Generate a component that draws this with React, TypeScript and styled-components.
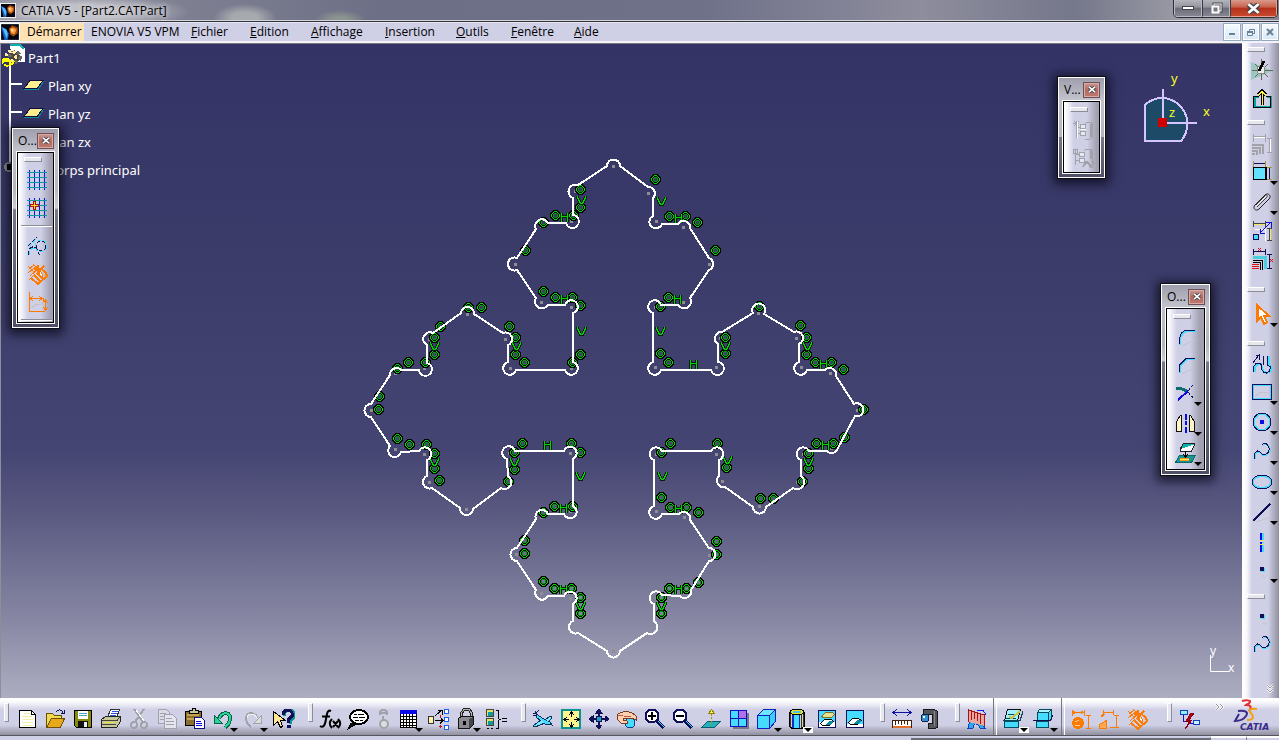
import React from "react";
import styled, { createGlobalStyle, css } from "styled-components";

const UI_FONT = '"Open Sans", "Noto Sans", sans-serif';
const TREE_FONT = '"Noto Sans", "Open Sans", sans-serif';

const GlobalStyle = createGlobalStyle`
  * { box-sizing: border-box; }
  body { margin: 0; overflow: hidden; background: #cfcfe6; font-family: ${UI_FONT}; }
  button { font: inherit; color: inherit; margin: 0; padding: 0; border: 0; background: none; }
  ul { list-style: none; margin: 0; padding: 0; }
  svg { display: block; }
`;

/* ---------- window frame ---------- */

const Window = styled.div`
  display: flex;
  flex-direction: column;
  height: 100vh;
  min-width: 0;
`;

const TitleBar = styled.header`
  display: flex;
  align-items: center;
  flex: none;
  height: 22px;
  border-bottom: 1px solid #34343e;
  box-shadow: inset 0 -1px #d4d4dc;
  background:
    radial-gradient(ellipse 110px 18px at 80px 12px, #c0c0c8 40%, transparent),
    radial-gradient(ellipse 32px 14px at 245px 18px, #a6aaae 40%, transparent),
    radial-gradient(ellipse 26px 10px at 340px 20px, #8c9490 30%, transparent),
    linear-gradient(90deg, #8e8f9c, #6d6f86 30%, #6f7189 55%, #8d8d9d 72%, #75778a 84%, #a6a6ae 95%, #83838f);
`;

const Title = styled.h1`
  flex: 1;
  margin: 0 0 0 5px;
  font-size: 12px;
  line-height: 20px;
  font-weight: 400;
  color: #000;
  white-space: nowrap;
  text-shadow: 0 0 5px #d8d8dc, 0 0 5px #d8d8dc;
`;

const CaptionButtons = styled.div`
  display: flex;
  align-self: flex-start;
  height: 18px;
  margin-right: 1px;
  border: 1px solid #2c2c34;
  border-top: 0;
  border-radius: 0 0 5px 5px;
  overflow: hidden;
`;

const CaptionButton = styled.button<{ $close?: boolean }>`
  display: grid;
  place-items: center;
  width: ${(p) => (p.$close ? 47 : 28)}px;
  height: 17px;
  border: 1px solid ${(p) => (p.$close ? "#e8a090" : "#b8b8c2")};
  border-top: 0;
  background: ${(p) =>
    p.$close
      ? "linear-gradient(#d99a8c, #c9604a 45%, #b5301a 50%, #c8482c)"
      : "linear-gradient(#b4b4bc, #94949e 45%, #6c6c78 50%, #868692)"};
  & + & { border-left: 1px solid #3a3a44; }
`;

const MenuBar = styled.nav`
  display: flex;
  align-items: center;
  flex: none;
  height: 21px;
  background: #cfcfe6;
  border-top: 1px solid #e6e6f2;
  border-bottom: 2px solid #f2f2f8;
`;

const MenuList = styled.ul`
  display: flex;
  flex: 1;
  height: 18px;
`;

const MenuItem = styled.button<{ $w: number; $active?: boolean }>`
  display: block;
  width: ${(p) => p.$w}px;
  height: 18px;
  padding-left: 7px;
  font-size: 12px;
  line-height: 18px;
  white-space: nowrap;
  text-align: left;
  background: ${(p) => (p.$active ? "#ffe2b3" : "transparent")};
`;

const AccessKey = styled.span`
  text-decoration: underline;
`;

const MdiButton = styled.button`
  display: grid;
  place-items: center;
  width: 18px;
  height: 18px;
  margin-left: 1px;
  border: 1px solid #93a9bd;
  background: linear-gradient(#f4faff, #d9e8f6);
  box-shadow: inset 0 0 0 1px #fff;
`;

const MdiGroup = styled.div`
  display: flex;
`;

const Body = styled.div`
  position: relative;
  display: flex;
  flex: 1;
  min-height: 0;
`;

const Main = styled.main`
  display: flex;
  flex-direction: column;
  flex: 1;
  min-width: 0;
`;

/* ---------- drawing area ---------- */

const Canvas = styled.section`
  position: relative;
  flex: 1;
  min-height: 0;
  overflow: hidden;
  border-left: 1px solid #8e8e98;
  border-top: 1px solid #77777f;
  background: linear-gradient(#333366, #3b3b6a 30%, #454573 62%, #55557e 70%, #81819f 86%, #adadc1);
`;

const SketchSvg = styled.svg`
  position: absolute;
  inset: 0;
  width: 100%;
  height: 100%;
`;

const Tree = styled.ul`
  position: relative;
  width: 180px;
  padding-left: 1px;
`;

const TreeNode = styled.li`
  display: flex;
  align-items: center;
  height: 28px;
  font-family: ${TREE_FONT};
  font-size: 13px;
  line-height: 18px;
  color: #fff;
  white-space: nowrap;
`;

const TreeGlyph = styled.svg`
  flex: none;
  height: 28px;
  margin-right: 2px;
`;

const CompassSvg = styled.svg`
  position: absolute;
  top: 20px;
  right: 21px;
`;

const AxisSvg = styled.svg`
  position: absolute;
  right: 6px;
  bottom: 20px;
`;

/* ---------- toolbars ---------- */

const SideBar = styled.aside`
  display: flex;
  flex-direction: column;
  flex: none;
  width: 37px;
  background: linear-gradient(90deg, #fff 2px, #f6f6fb 5px, #cfcfe6 10px, #cfcfe6 26px, #8f8f9f);
`;

const BottomWrap = styled.div`
  position: relative;
  flex: none;
`;

const BottomBar = styled.div`
  display: flex;
  align-items: flex-start;
  height: 38px;
  border-bottom: 1px solid #55555f;
  background: linear-gradient(#fff 2px, #f4f4fa 5px, #cfcfe6 12px, #cfcfe6 27px, #90909f);
`;

const StatusBar = styled.footer`
  display: flex;
  height: 4px;
  justify-content: flex-end;
  background: #cfcfe6;
`;

const StatusPart = styled.span<{ $w: number; $sunken?: boolean }>`
  width: ${(p) => p.$w}px;
  border-bottom: ${(p) => (p.$sunken ? "2px solid #6c6c78" : "0")};
  border-top: ${(p) => (p.$sunken ? "0" : "2px solid #fff")};
  border-left: ${(p) => (p.$sunken ? "0" : "1px solid #77777f")};
`;

const Cell = styled.span<{ $vertical?: boolean; $menu?: boolean; $narrow?: boolean }>`
  position: relative;
  flex: none;
  display: block;
  ${(p) =>
    p.$vertical
      ? css`
          height: ${p.$menu ? 30 : 28}px;
          padding: 2px 0 0 8px;
        `
      : css`
          width: ${p.$narrow ? 22 : p.$menu ? 30 : 28}px;
          height: 37px;
          padding: 9px 0 0 ${p.$narrow ? 0 : 2}px;
        `}
`;

const ToolButton = styled.button`
  display: block;
  width: 24px;
  height: 24px;
`;

const Caret = styled.span<{ $boxed?: boolean }>`
  position: absolute;
  right: 0;
  bottom: 2px;
  padding: 1px;
  background: ${(p) => (p.$boxed ? "#fff" : "transparent")};
  &::before {
    content: "";
    display: block;
    border: 4px solid transparent;
    border-top-color: #000;
    border-bottom: 0;
  }
`;

const Grip = styled.span<{ $vertical?: boolean; $space: number; $before: number }>`
  display: block;
  flex: none;
  ${(p) =>
    p.$vertical
      ? css`
          height: ${p.$space}px;
          padding: ${p.$before}px 0 0 5px;
          &::before { content: ""; display: block; width: 16px; height: 3px; }
        `
      : css`
          width: ${p.$space}px;
          padding: 5px 0 0 ${p.$before}px;
          &::before { content: ""; display: block; width: 3px; height: 17px; }
        `}
  &::before {
    background: #e6e6ee;
    border-top: 1px solid #fff;
    border-left: 1px solid #fff;
    border-right: 1px solid #8d8d97;
    border-bottom: 1px solid #8d8d97;
  }
`;

const Divider = styled.span`
  flex: none;
  width: 8px;
  height: 37px;
  padding-left: 2px;
  &::before {
    content: "";
    display: block;
    width: 2px;
    height: 37px;
    border-left: 1px solid #77777f;
    border-right: 1px solid #fff;
  }
`;

const More = styled.button<{ $down?: boolean }>`
  align-self: ${(p) => (p.$down ? "flex-end" : "auto")};
  margin: ${(p) => (p.$down ? "auto 4px 5px 0" : "5px 0 0 12px")};
`;

const Logo = styled.svg`
  position: absolute;
  right: 3px;
  bottom: 8px;
`;

/* ---------- floating palettes ---------- */

const PaletteBox = styled.section<{ $w: number }>`
  position: absolute;
  width: ${(p) => p.$w}px;
  padding: 0 4px 4px;
  border: 1px solid #0c0c14;
  box-shadow: inset 0 0 0 1px #fff, 0 2px 10px 3px rgba(5, 5, 20, 0.75);
  background: linear-gradient(#9c9cab, #c2c2cc 22px, #b4b4bf 60px, #ccccd4 40%, #77778a 41%, #4e4e66);
`;

const LeftPalette = styled(PaletteBox)`
  left: 10px;
  top: 83px;
`;

const ViewPalette = styled(PaletteBox)`
  right: 136px;
  top: 32px;
`;

const OperationPalette = styled(PaletteBox)`
  right: 31px;
  top: 239px;
`;

const PaletteTitle = styled.h2`
  display: flex;
  align-items: center;
  justify-content: space-between;
  height: 23px;
  margin: 0;
  padding: 2px 1px 0 2px;
  font-size: 12px;
  line-height: 18px;
  font-weight: 400;
  color: #000;
`;

const PaletteClose = styled.button`
  display: grid;
  place-items: center;
  width: 17px;
  height: 16px;
  border: 1px solid #6b5058;
  box-shadow: inset 0 0 0 1px #d8aaa6;
  background: linear-gradient(#c99a96, #b4685e 50%, #bd7a70);
`;

const PaletteBody = styled.div<{ $h: number }>`
  height: ${(p) => p.$h}px;
  overflow: hidden;
  border: 1px solid #fff;
  outline: 1px solid #000;
  outline-offset: -2px;
  padding: 2px;
  background: linear-gradient(90deg, #fff 2px, #f0f0f8 5px, #cfcfe6 11px, #cfcfe6 24px, #a0a0b0 34px);
`;

const PaletteCell = styled(Cell)`
  padding: 2px 0 0 6px;
`;

const PaletteRule = styled.hr`
  height: 2px;
  margin: 3px 0 5px 2px;
  border: 0;
  border-top: 1px solid #8d8d97;
  background: #fff;
`;

/* ---------- icons ---------- */

const N = "#101058";
const C = "#45dcff";
const O = "#ff7a00";
const G = "#a2a2aa";

const S = (d: string, stroke: string, w = 1, fill = "none") => (
  <path d={d} stroke={stroke} strokeWidth={w} fill={fill} />
);

const gridLines = (
  <>
    {S("M4.5 2v20M9.5 2v20M14.5 2v20M19.5 2v20", "#0a18e8")}
    {S("M2 4.5h20M2 9.5h20M2 14.5h20M2 19.5h20", "#0c9a9a")}
  </>
);

const curveIcon = (
  <>
    {S("M5 19C5 12 8 10 11 14C14 18 21 14 20 9C19 4 15 3 13 6", C)}
    {S("M4 19C4 11 8 9 11 13C14 17 20 13 19 8C18 4 15 2 12 5", N)}
  </>
);

const pointIcon = (
  <>
    {S("M11 20l3-3M14 20l3-3", "#c4c4cc")}
    <rect x="11" y="10" width="4" height="4" fill={C} />
    <rect x="10" y="9" width="4" height="4" fill={N} />
  </>
);

const handBrush = (
  <>
    {S("M4 7l5-4M3 11l9-7M5 14l9-8M4 18l5-5M3 4l6 6M8 2l5 5", O, 1)}
    {S("M13 3v8M9 7h9M15 8l4-4M10 14l5 5", O, 2)}
    {S("M14 6l4 8-3 1z", O, 1, "#fff")}
    {S("M6 16l7 6 9-8-2-5M9 13l6 6M12 11l6 6M18 8l4 5", O, 2)}
  </>
);

const icons: Record<string, React.ReactNode> = {
  newFile: (
    <>
      {S("M4.5 3.5h12l4 4v13h-16z", "#000", 1, "#fff")}
      {S("M7 9h10M8 12h11M7 15h11M8 18h10M9 6h6", "#f4f0a0")}
      {S("M16.5 3.5v4h4", "#000")}
    </>
  ),
  open: (
    <>
      {S("M3.5 20.5v-14h6l2 2h7v3", "#6a5200", 1, "#f0d850")}
      {S("M3.5 20.5l5-9h13l-4 9z", "#6a5200", 1, "#e8a818")}
      {S("M13 5c2-3 6-3 7 1M18 6h3v-3", N)}
    </>
  ),
  save: (
    <>
      {S("M3.5 3.5h17v17h-15l-2-2z", "#000", 1, "#8a8a10")}
      <rect x="7" y="4" width="10" height="8" fill="#fff" />
      {S("M8 6.5h8M8 8.5h8", "#4aa8c8")}
      <rect x="7" y="14" width="10" height="6" fill="#111" />
      <rect x="13" y="15" width="3" height="5" fill="#eee" />
    </>
  ),
  print: (
    <>
      {S("M8.5 10.5l3-8h9l-3 8z", "#333", 1, "#fff")}
      {S("M13 4.5h6M12 6.5h6M11 8.5h6", "#2a50e0")}
      {S("M2.5 12.5l4-3h15v5l-4 6h-15z", "#222", 1, "#c8c89a")}
      {S("M3 13.5h15l3-4M3 17.5h14", "#44443c")}
      {S("M5 15.5h10", "#e8e030")}
    </>
  ),
  cut: (
    <>
      {S("M7 2l9 13M17 2l-9 13", G, 2)}
      <circle cx="7" cy="18" r="3" fill="none" stroke={G} strokeWidth="2" />
      <circle cx="17" cy="18" r="3" fill="none" stroke={G} strokeWidth="2" />
      {S("M9 3l8 11", "#fff")}
    </>
  ),
  copy: (
    <>
      {S("M3.5 2.5h8l3 3v11h-11z", G, 1, "#dadaea")}
      {S("M5 6.5h6M5 9.5h7M5 12.5h6", G)}
      {S("M9.5 7.5h8l4 4v10h-12z", G, 1, "#e4e4f0")}
      {S("M11 11.5h6M11 14.5h8M11 17.5h8", G)}
    </>
  ),
  paste: (
    <>
      <rect x="2.5" y="4.5" width="16" height="14" fill="#8a7030" stroke="#000" />
      {S("M4 8h12M4 12h8", "#c8a050", 2)}
      {S("M6.5 6.5v-3h3v-2h3v2h3v3z", "#000", 1, "#c8c8a0")}
      {S("M11.5 10.5h7l3 3v8h-10z", "#101080", 1, "#fff")}
      {S("M13 14.5h5M13 16.5h6M13 18.5h6", "#1010e0")}
    </>
  ),
  undo: (
    <>
      {S("M8 12C10 5 19 4 19 11C19 15 17 18 14 21", "#0a6050", 4)}
      {S("M8 12C10 5 19 4 19 11C19 15 17 18 14 20", "#28d890", 2)}
      {S("M3.5 8.5v8h8z", "#0a6050", 1, "#28d890")}
    </>
  ),
  redo: (
    <>
      {S("M17 12C15 5 6 4 5 11C5 15 7 18 10 20", G, 2)}
      {S("M17 13C15 6 7 5 6 11", "#eee")}
      {S("M20.5 8.5v8h-8z", G, 1, "#ddd")}
    </>
  ),
  help: (
    <>
      {S("M13 9v-3l3-3h4l3 3v4l-4 4v3", "#0e9494", 3)}
      {S("M12 8v-2l3-3h4l2 3v3l-4 4v3", N, 3)}
      <rect x="16" y="18" width="4" height="3" fill={N} />
      {S("M2.5 4.5v14l4-4 3 6 2-1-2-6h5z", "#000", 1, "#ffe890")}
    </>
  ),
  formula: (
    <g shapeRendering="auto">
      {S("M13 4C9 2 9 8 8 12C7 19 5 21 2 19M4 9.5h8", "#000", 2)}
      {S("M14 12c-3 3-3 6 0 9M20 12c3 3 3 6 0 9M15 14l5 6M20 14l-5 6", "#000", 2)}
    </g>
  ),
  comment: (
    <>
      {S("M5 16l-3 6l8-5", "#000", 1, "#111")}
      <ellipse cx="13" cy="10" rx="9" ry="7" fill="#fff" stroke="#000" strokeWidth="2" />
      {S("M8 7.5h3M12 7.5h6M7 10.5h5M13 10.5h6M9 13.5h4M14 13.5h3", "#000")}
    </>
  ),
  check: (
    <g shapeRendering="auto">
      {S("M8 8V5l2-2h3l2 2v3M8 6h7M11 9v4", G, 2)}
      <circle cx="12" cy="17" r="4" fill="#ddd" stroke={G} strokeWidth="2" />
    </g>
  ),
  table: (
    <>
      <rect x="4.5" y="3.500" width="16" height="17" fill="#fff" stroke="#000" />
      <rect x="4" y="3" width="17" height="4" fill="#0a0ae8" />
      {S("M4 9.5h17M4 12.5h17M4 15.5h17M4 18.5h17M7.5 7v14M10.5 7v14M13.5 7v14M16.5 7v14", "#000")}
    </>
  ),
  relations: (
    <>
      <rect x="2.5" y="9.5" width="5" height="7" fill="#fff0b0" stroke="#333" />
      {S("M9 13.5h8M9 9l7-6M12 3.5h4.5v4M14 10l3 3.500-3 3", "#000")}
      <rect x="18.5" y="2.5" width="4" height="4" fill="#fff" stroke="#1860f0" />
      <rect x="18.5" y="10.5" width="4" height="4" fill="#fff" stroke="#1860f0" />
      <rect x="18.5" y="18.5" width="4" height="4" fill="#fff" stroke="#1860f0" />
      {S("M14.5 8v3M14.5 18v3M13 19.5h3", "#c01020")}
    </>
  ),
  lock: (
    <>
      {S("M7.5 11V6l3-4h4l3 4v5", "#222", 3)}
      {S("M7.5 11V6l3-4h4l3 4v5", "#b0b0b0", 1)}
      {S("M4.5 11.5l3-2h12v8l-4 4h-11z", "#111", 1, "#8a8a90")}
      {S("M15 12l4-2v7l-4 4z", "none", 0, "#44444a")}
      <rect x="9" y="14" width="3" height="4" fill="#000" />
    </>
  ),
  equivalent: (
    <>
      <rect x="2.5" y="2.5" width="7" height="7" fill="#e8e060" stroke="#444" />
      <rect x="4" y="5" width="5" height="4" fill="#0c9a9a" />
      <rect x="2.5" y="11.5" width="7" height="7" fill="#e8e060" stroke="#444" />
      <rect x="4" y="14" width="5" height="4" fill="#0c9a9a" />
      {S("M3 21.5h2M7 21.5h2M12 3.5h2v8l2 1l-2 1v8h-2M18 11.5h5M18 14.5h5", "#000")}
    </>
  ),
  fly: (
    <>
      {S("M5 5.500L8 9L13 12L19 15L21 18L14 17L10 14L6 11Z", "#0a3060", 1, C)}
      {S("M10 13L2 19L4 20L14 16M15 12L20 9L21 11L17 15", "#0a3060", 1, "#7ae8ff")}
      {S("M2 6h3l3-3M2 9l4-1", N)}
    </>
  ),
  fit: (
    <>
      <rect x="3" y="3" width="18" height="18" fill="#fff38c" stroke="#0c9494" strokeWidth="2" />
      {S("M12.5 5v14M5 12.5h14", "#000")}
      {S("M10 8l2.5-3 2.5 3M10 17l2.5 3 2.5-3M8 10l-3 2.500 3 2.500M17 10l3 2.500-3 2.500", "#000")}
      <rect x="10" y="10" width="5" height="5" fill="#fff38c" />
    </>
  ),
  pan: (
    <>
      {S("M12 2v20M2 12h20", N, 2)}
      {S("M9 6l3-4 3 4zM9 18l3 4 3-4zM6 9l-4 3 4 3zM18 9l4 3-4 3z", N, 1, N)}
      <rect x="9.5" y="9.5" width="5" height="5" fill="#1ca0c0" stroke={N} />
    </>
  ),
  rotate: (
    <>
      <circle cx="15" cy="16" r="5" fill={C} stroke="#123c90" />
      {S("M2.5 7.5C8 3 16 4 21 9v4l-4-2H9l-1 2l4 1v2H6L3 13z", "#7a3a20", 1, "#ffd0b0")}
      {S("M3 8.5h5M9 9.5h7", "#b06040")}
    </>
  ),
  zoomIn: (
    <>
      {S("M14 14l7 7", N, 4)}
      {S("M15 14l6 6", C)}
      <circle cx="9" cy="9" r="6.5" fill="#fff" stroke={N} strokeWidth="2" />
      {S("M9 5v8M5 9h8", "#000", 2)}
    </>
  ),
  zoomOut: (
    <>
      {S("M14 14l7 7", N, 4)}
      {S("M15 14l6 6", C)}
      <circle cx="9" cy="9" r="6.5" fill="#fff" stroke={N} strokeWidth="2" />
      {S("M5 9h8", "#000", 2)}
    </>
  ),
  normal: (
    <>
      {S("M2.5 20.5l6-6h13l-6 6z", "#0c5c70", 1, "#28b0b8")}
      {S("M12.5 17v-3M12.5 12v-2M12.5 9v-2", "#b09000")}
      {S("M9.5 6.5l3-4 3 4z", "#908000", 1, "#fff060")}
    </>
  ),
  multiView: (
    <>
      <rect x="6" y="6" width="16" height="16" fill="#777784" />
      <rect x="3.5" y="3.5" width="16" height="16" fill={C} stroke="#1010c0" />
      <rect x="12" y="4" width="7" height="7" fill="#b070e8" />
      {S("M11.5 4v15M4 11.5h15", "#1010c0")}
    </>
  ),
  iso: (
    <>
      {S("M2.5 8.5h12v13h-12z", "#1020c0", 1, C)}
      {S("M2.5 8.5l6-6h12l-6 6z", "#1020c0", 1, "#6ae6ff")}
      {S("M14.5 8.5l6-6v12l-6 7z", "#1020c0", 1, "#38d0f8")}
    </>
  ),
  cylinder: (
    <>
      {S("M4.5 5v14C6 23 18 23 19.5 19V5", "#000", 1, "#1828c8")}
      <rect x="9" y="7" width="5" height="14" fill={C} />
      {S("M6.5 6v14M15.5 6v15M17.5 6v14", "#f0e020")}
      <ellipse cx="12" cy="5" rx="7" ry="3" fill="#f0e020" stroke="#000" />
      <ellipse cx="12" cy="5" rx="4" ry="1" fill="#40c8f0" />
    </>
  ),
  hideShow: (
    <>
      <rect x="3.5" y="3.5" width="17" height="17" fill={C} stroke={N} />
      <rect x="4" y="15" width="16" height="5" fill="#fff" />
      {S("M6.5 9.5l4-4h7l2 2-3 3h-8z", "#777020", 1, "#e8e090")}
      {S("M5.5 16.5l4-4h7l2 2-4 4h-7z", "#000", 1, "#fff")}
      {S("M10 18l4-4h3l1 1-3 3z", "none", 0, "#0c8c9c")}
    </>
  ),
  swap: (
    <>
      <rect x="3.5" y="3.5" width="17" height="17" fill={C} stroke={N} />
      <rect x="4" y="17" width="16" height="3" fill="#fff" />
      {S("M5.5 15.5l4-4h6l3 2-4 4h-7z", "#000", 1, "#fff")}
      {S("M10 17l4-4h3l1 1-3 3z", "none", 0, "#0c8c9c")}
    </>
  ),
  measure: (
    <>
      {S("M3 5.5h18M7 2L3 5.5L7 9M17 2l4 3.500L17 9", "#1010a0")}
      <rect x="2.5" y="13.5" width="19" height="7" fill="#fff" stroke="#402010" />
      {S("M3 20h18", "#e07030", 2)}
      {S("M5.5 14v4M8.5 14v3M11.5 14v4M14.5 14v3M17.500 14v4", "#402010")}
    </>
  ),
  inertia: (
    <>
      {S("M5.500 2.500h11l3 2v16l-3 1h-6v-5h4v-9h-9z", "#18181c", 1, "#55555c")}
      {S("M16.500 4v15", "#88888e")}
      <circle cx="7" cy="11" r="4" fill="#3090d0" stroke="#102040" />
      <rect x="5" y="9" width="2" height="2" fill="#fff" />
    </>
  ),
  cutPart: (
    <>
      {S("M3 21C5 9 13 8 20 21L15 21C13 16 9 15 8 21z", "#1040c0", 1, "#30a8f0")}
      {S("M3.5 15V3L19.5 8V19", "#b01010", 1, "#e8a8a0")}
      {S("M6.5 4v9M9.5 5v7M12.5 6v8M15.5 7v10", "#b01010")}
      {S("M12 3.500h6l3 4", "#1020e0")}
    </>
  ),
  sketchPos: (
    <>
      {S("M3.5 14.5h14v6h-14z", "#005060", 1, C)}
      {S("M6.5 2.5h13l-3 11h-13z", "#101010", 1, "#9cf0ff")}
      {S("M7 7.5h10M5 11.5h10M2 13.5h17l3-9", "#084858")}
      {S("M8 10l3 1 8-7", "#c8c040", 2)}
    </>
  ),
  sketchPos2: (
    <>
      {S("M5.5 14.5h12v6h-12z", "#005060", 1, C)}
      {S("M6.5 5.500l2-3h12l-3 3z", "#084858", 1, "#a8f4ff")}
      {S("M6.5 5.5h11v8h-11zM17.500 5.500l3-3v10l-3 2z", "#084858", 1, C)}
      {S("M2 13.5h17l3-5", "#101050")}
    </>
  ),
  orangeDim: (
    <>
      <circle cx="9" cy="16" r="6" fill={O} />
      {S("M3.5 3v6M15.5 3v6M3 5.5h12M19.5 9v12M17 8.5h5M17 21.5h5", O)}
      {S("M6 4l-2 1.500 2 1.500M12 4l2 1.500-2 1.500", O)}
      {S("M6 15l4-2M6 18.5h5", "#ffd0a0")}
    </>
  ),
  orangeContour: (
    <>
      {S("M6.5 3v5M16.5 3v5M6 5.5h10M19.500 8v12M17 20.500h5M17 8.500h5", O)}
      {S("M4 10l3-3", O, 2)}
      {S("M2.500 17.500l7-4v8h-7zM13 20.500h5", O, 1, "#ffa850")}
    </>
  ),
  orangeHatch: handBrush,
  spec: (
    <>
      {S("M3.5 3.5h7v4h-7z", "#1040c0", 1, "#8af0f0")}
      {S("M16.5 13.5h6v4h-6z", "#1040c0", 1, "#c8f0ff")}
      {S("M6.5 8v6.500h4M13 16.500h3", "#1010d0")}
      {S("M14 6l-5 8h4l-5 8 7-9h-3l5-7z", "#900010", 1, "#b00818")}
    </>
  ),
  star: (
    <>
      {S("M1 4l22 9-22 9z", "none", 0, "#9cc8c4")}
      {S("M11.500 1v21M2 12.500h21M5 6l13 13M18 6L5 19", "#66665c")}
      <circle cx="11" cy="12" r="4" fill="#ececec" stroke="#88887c" />
      {S("M9 13l5-10", "#000", 3)}
    </>
  ),
  exit: (
    <>
      {S("M9 11H5v10H21V11H17", "#0ca0a0", 2)}
      {S("M9 10.5H3.5v11H20.5v-11H16", "#000")}
      {S("M12 19V6M8 9l4-4 4 4", "#000", 3)}
      {S("M12.5 19V6M8 9.5l4-4 4 4", "#fff040")}
    </>
  ),
  constraintDlg: (
    <>
      {S("M3.5 2v8M15.5 2v8M4 4.5h11M19.5 6v14M17 6.5h5M17 20.5h5", G)}
      {S("M2 12.500h11v9M2 15.500h8v6M2 18.500h5v4M2 21.500h3", G, 2)}
      {S("M4 5.5h11M20.5 7v13", "#fff")}
    </>
  ),
  constraint: (
    <>
      {S("M3.5 1v6M15.5 1v6M17 7.5h5M17 19.5h5", "#a09840")}
      {S("M4 3.5h11M19.5 8v11", N)}
      <rect x="3.5" y="7.5" width="12" height="12" fill="#62e2ff" stroke="#000" />
      {S("M15.500 7v13", "#000", 2)}
    </>
  ),
  clip: (
    <g shapeRendering="auto">
      {S("M5 15L15 5c3-3 7 1 4 4L9 19c-3 3-7-1-4-4", "#222")}
      {S("M7 17L17 7c1-2-1-3-2-1L6 15", "#444")}
      {S("M6 16L16 6", "#fff")}
    </g>
  ),
  autoConstraint: (
    <>
      {S("M3.5 1v6M15.5 1v6M4 3.5h11M19.5 8v12M17 8.5h5M17 20.5h5", "#444")}
      {S("M4 4.5h11M20.5 9v11", "#f0e860")}
      {S("M5 9.500h10v11M8 13v4", "#fff")}
      {S("M10 13L21 2M16 2.500h5.500v5M10.500 9v4.500h4", "#1010e0")}
      <rect x="3.5" y="14.5" width="5" height="5" fill={C} stroke={N} />
    </>
  ),
  animate: (
    <>
      {S("M3.5 1v6M15.5 1v6M4 3.5h11M19.5 6v14M17 6.5h5M17 20.5h5", N)}
      {S("M3 9h12v12", "#48d0e0", 3)}
      {S("M3 12.500h9v9M3 14.500h7v7", "#000")}
      {S("M2 16.5h7M2 18.5h7M2 20.5h7", "#e01010")}
      {S("M8 0l3 3M11 0l-3 3M20 11l3 3M23 11l-3 3", "#e01010")}
    </>
  ),
  select: (
    <>
      {S("M7 3v16l4-4 3 7 3-2-3-6h5z", O, 2, "#fff")}
      {S("M8 4v13", O, 2)}
    </>
  ),
  profile: (
    <>
      {S("M5 20v-5l3-3h3l1 4 1 3 3 2 4-1 2-4-3-3V4", C, 2)}
      {S("M3.500 20v-5l3-4h3l2 2v4l2 3 3 1 3-2 1-4-3-2V4M13.500 4v9M3 11l6-8v5M5.500 3.500H9", N)}
    </>
  ),
  rectangle: (
    <>
      <rect x="3" y="5" width="18" height="14" fill="none" stroke={C} strokeWidth="2" />
      <rect x="2.5" y="4.5" width="19" height="15" fill="none" stroke={N} />
      {S("M5 16l6-4h7", "#c4c4cc")}
    </>
  ),
  circle: (
    <>
      <circle cx="12" cy="12" r="8" fill="none" stroke={C} strokeWidth="2" />
      <circle cx="12" cy="12" r="9" fill="none" stroke={N} />
      <rect x="10" y="10" width="4" height="4" fill="#0a0ae8" />
    </>
  ),
  spline: curveIcon,
  ellipse: (
    <>
      <ellipse cx="12" cy="12" rx="9" ry="6" fill="none" stroke={C} strokeWidth="2" />
      <ellipse cx="12" cy="12" rx="10" ry="7" fill="none" stroke={N} />
    </>
  ),
  line: (
    <>
      {S("M4 21L21 4", C)}
      {S("M3 21L20 4", N, 2)}
      {S("M6 22l15-5", "#c4c4cc")}
    </>
  ),
  axis: (
    <>
      {S("M13 3v7M13 12v1M13 15v7", C, 2)}
      {S("M11 3v7M11 12v2M11 15v7", "#0a0ae8", 2)}
      {S("M10 10.500h4M10 14.500h4", "#f0e860")}
    </>
  ),
  point: pointIcon,
  grid: gridLines,
  snap: (
    <>
      {gridLines}
      {S("M9.500 5v9M5 9.500h9", "#b01010", 3)}
      {S("M9.500 6v7M6 9.500h7", "#ffe020")}
    </>
  ),
  construction: (
    <g strokeDasharray="4 2">
      {S("M3 12L12 3M3 21c0-7 5-10 8-7s1 6 4 7", N)}
      {S("M4 13l8-9M4 21c0-6 4-8 7-6", C)}
      <circle cx="16" cy="12" r="5" fill="none" stroke={N} />
      <circle cx="16" cy="12" r="6" fill="none" stroke={C} />
    </g>
  ),
  geomConstraint: handBrush,
  dimConstraint: (
    <>
      {S("M4.5 2v19.500H20M4 8.500h14M20.5 10v9M18 10.5h4M18.500 8v5", O)}
      {S("M8 6l-3 2.500 3 2.500M14 6l3 2.500-3 2.500M18 13l2.500-3 2.500 3M18 17l2.500 3 2.500-3", O)}
      {S("M6 18l6-4 3 1 4-3", "#c4c4cc")}
    </>
  ),
  viewDoc: (
    <>
      {S("M5.500 3v17M6 9.500h3M6 15.500h3M2 5.500h6M3 3l5 5M8 3L3 8", G)}
      {S("M9.500 6.500h5v4h-5zM9.500 13.500h5v4h-5z", G, 1, "#e8e8f0")}
      {S("M13.500 6.500l2-2h5l1 2v13l-3 2h-5", G, 1)}
      <rect x="19" y="6" width="3" height="13" fill={G} />
      {S("M6.500 4v16M10 11.500h5", "#fff")}
    </>
  ),
  viewDoc2: (
    <>
      {S("M4.500 3v16M5 8.500h3M5 14.500h3M2 3.500h4v4H2z", G)}
      {S("M8.500 6.500h5v4h-5zM8.500 12.500h5v4h-5z", G, 1, "#e8e8f0")}
      {S("M12.500 5.500l2-2h6l1 2v8", G)}
      <rect x="19" y="4" width="3" height="9" fill={G} />
      {S("M12 21c2-5 5-5 7-2s4-2 2-4M15 15l6 7", G, 2)}
    </>
  ),
  corner: (
    <>
      {S("M6 20V13l3-5 4-2h9", C, 2)}
      {S("M5.500 19v-6l2-5 4-3h9", N)}
      {S("M8 21l14-7", "#c4c4cc")}
    </>
  ),
  chamfer: (
    <>
      {S("M6 20v-7l7-7h8", C, 2)}
      {S("M5.500 19v-7l7-7h8", N)}
      {S("M8 21l12-6", "#c4c4cc")}
    </>
  ),
  trim: (
    <>
      {S("M2 7.500h5l7 3", "#0c6c6c", 3)}
      {S("M4 19L14 10", "#0a0ae8", 2)}
      <g strokeDasharray="3 2">{S("M14 10L20 3M14 11l6 7", N)}</g>
    </>
  ),
  mirror: (
    <>
      {S("M2.5 20.5V11l4-7h1v16.500zM15.5 20.5V4h1l4 7v9.500z", "#111", 1, "#fdf6c4")}
      {S("M12 3v6M12 10v4M12 16v6", "#0a0ae8", 2)}
    </>
  ),
  project: (
    <>
      {S("M6.5 7.5l3-5h11l-2 5z", "#222", 1, "#0cb0a8")}
      {S("M6.500 8v2.500h11l3-7", "#222", 1, "#fff")}
      {S("M1.5 21.5l4-7h16l-4 7z", "#0a6868", 1, "#189890")}
      {S("M6 18.500h9", "#ff9020", 3)}
      {S("M6 18.500h9", "#ffee40")}
      {S("M11.5 10v6M9 13l2.500 3 2.500-3", "#000")}
    </>
  ),
};

interface Tool {
  icon: string;
  label: string;
  menu?: boolean;
  boxed?: boolean;
  narrow?: boolean;
}
interface GripSpec {
  space: number;
  before: number;
}
type BarItem = Tool | GripSpec | "divider";

const t = (icon: string, label: string, extra: Partial<Tool> = {}): Tool => ({ icon, label, ...extra });
const M = { menu: true };

const bottomTools: BarItem[] = [
  { space: 13, before: 4 },
  t("newFile", "Nouveau"), t("open", "Ouvrir"), t("save", "Enregistrer"), t("print", "Imprimer"),
  t("cut", "Couper"), t("copy", "Copier"), t("paste", "Coller"), t("undo", "Annuler", M),
  t("redo", "Rétablir", M), t("help", "Qu'est-ce que c'est ?"),
  { space: 19, before: 11 },
  t("formula", "Formule"), t("comment", "Commentaire"), t("check", "Vérification", { narrow: true }),
  t("table", "Table de paramétrage", M), t("relations", "Relations"), t("lock", "Verrouiller", M),
  t("equivalent", "Dimensions équivalentes"),
  { space: 19, before: 11 },
  t("fly", "Mode survol"), t("fit", "Centrer tout"), t("pan", "Panoramique"), t("rotate", "Rotation"),
  t("zoomIn", "Zoom avant"), t("zoomOut", "Zoom arrière"), t("normal", "Vue normale"),
  t("multiView", "Vues multiples"), t("iso", "Vue isométrique", M),
  t("cylinder", "Ombrage", { menu: true, boxed: true }), t("hideShow", "Cacher/Afficher"),
  t("swap", "Espace visible"),
  { space: 19, before: 11 },
  t("measure", "Mesure entre"), t("inertia", "Mesure d'inertie"),
  { space: 19, before: 11 },
  t("cutPart", "Couper la pièce"), "divider",
  t("sketchPos", "Fond 3D", { menu: true, boxed: true }), t("sketchPos2", "Visualisation", M), "divider",
  t("orangeDim", "Diagnostics"), t("orangeContour", "Contraintes dimensionnelles"),
  t("orangeHatch", "Contraintes géométriques"),
  { space: 24, before: 16 },
  t("spec", "Analyse d'esquisse"),
];

const sideTools: BarItem[] = [
  { space: 13, before: 4 },
  t("star", "Esquisse"), t("exit", "Sortir de l'atelier"),
  { space: 18, before: 8 },
  t("constraintDlg", "Contraintes choisies"), t("constraint", "Contrainte", M), t("clip", "Fixer ensemble", M),
  t("autoConstraint", "Contrainte automatique"), t("animate", "Animer la contrainte"),
  { space: 26, before: 13 },
  t("select", "Sélection", M),
  { space: 20, before: 11 },
  t("profile", "Profil"), t("rectangle", "Rectangle", M), t("circle", "Cercle", M), t("spline", "Spline", M),
  t("ellipse", "Ellipse", M), t("line", "Droite", M), t("axis", "Axe"), t("point", "Point", M),
  { space: 17, before: 8 },
  t("point", "Point isolé"), t("spline", "Courbe"),
];

function Icon({ name }: { name: string }) {
  return (
    <svg width="24" height="24" viewBox="0 0 24 24" shapeRendering="crispEdges" aria-hidden="true">
      {icons[name]}
    </svg>
  );
}

function ToolCell({ tool, vertical }: { tool: Tool; vertical?: boolean }) {
  return (
    <Cell $vertical={vertical} $menu={tool.menu} $narrow={tool.narrow}>
      <ToolButton type="button" aria-label={tool.label}>
        <Icon name={tool.icon} />
      </ToolButton>
      {tool.menu && <Caret $boxed={tool.boxed} />}
    </Cell>
  );
}

function ToolStrip({ items, vertical }: { items: BarItem[]; vertical?: boolean }) {
  return (
    <>
      {items.map((item, i) => {
        if (item === "divider") return <Divider key={i} />;
        if ("space" in item)
          return <Grip key={i} $vertical={vertical} $space={item.space} $before={item.before} />;
        return <ToolCell key={i} tool={item} vertical={vertical} />;
      })}
    </>
  );
}

function CloseX({ width, height }: { width: number; height: number }) {
  return (
    <svg width={width} height={height} viewBox="0 0 9 9" preserveAspectRatio="none" aria-hidden="true">
      <path d="M1 1l7 7M8 1l-7 7" stroke="#44444c" strokeWidth="4" />
      <path d="M1 1l7 7M8 1l-7 7" stroke="#fff" strokeWidth="2" />
    </svg>
  );
}

function FlameIcon({ width, height }: { width: number; height: number }) {
  return (
    <svg width={width} height={height} viewBox="0 0 18 16" preserveAspectRatio="none" aria-hidden="true">
      <rect width="18" height="16" fill="#fff" />
      <rect x="1" y="1" width="16" height="14" fill="#050510" />
      <path d="M1 3l4 2 3 4-1 6H4z" fill="#1460c0" />
      <path d="M2 4l4 2 1 4-1 4z" fill="#58b8ff" />
      <path d="M8 5l3-3 5 2v5l-4 3-3-2z" fill="#a04810" />
      <path d="M9 5l3-1 3 2-2 4-3-1z" fill="#ff9a38" />
      <path d="M10 5l2 1v2l-2-1z" fill="#ffe8c0" />
    </svg>
  );
}

/* ---------- sketch geometry ---------- */

/* One row per corner: centre x, y, entry x, y, exit x, y. */
const corners: number[][] = [
  [613, 166, 607, 166, 620, 166], [648, 193, 648, 187, 653, 198], [656, 221, 653, 216, 662, 224],
  [683, 227, 678, 224, 690, 228], [709, 264, 709, 258, 709, 270], [683, 302, 690, 298, 678, 305],
  [655, 307, 661, 305, 653, 313], [655, 367, 653, 362, 661, 370], [716, 367, 711, 370, 718, 362],
  [720, 338, 718, 344, 722, 332], [758, 313, 753, 313, 764, 314], [796, 338, 794, 332, 799, 344],
  [801, 367, 799, 362, 807, 370], [830, 373, 825, 370, 836, 376], [857, 410, 854, 404, 855, 416],
  [831, 448, 838, 448, 827, 451], [803, 454, 809, 451, 801, 460], [797, 482, 801, 476, 793, 488],
  [759, 506, 766, 507, 753, 507], [722, 481, 725, 487, 719, 476], [716, 454, 719, 460, 711, 451],
  [656, 454, 662, 451, 654, 460], [656, 511, 654, 506, 662, 514], [684, 517, 679, 514, 690, 520],
  [709, 555, 709, 548, 709, 561], [684, 592, 691, 590, 680, 596], [656, 598, 662, 595, 654, 604],
  [651, 627, 654, 621, 647, 633], [613, 651, 620, 651, 607, 651], [575, 627, 578, 633, 573, 621],
  [570, 598, 573, 604, 564, 596], [541, 593, 548, 596, 536, 590], [516, 554, 517, 561, 517, 548],
  [541, 517, 536, 519, 548, 514], [570, 511, 564, 514, 573, 506], [570, 453, 573, 459, 564, 451],
  [509, 453, 515, 451, 507, 459], [505, 482, 508, 476, 501, 488], [466, 509, 473, 509, 460, 508],
  [429, 482, 432, 488, 427, 476], [424, 454, 427, 460, 419, 451], [395, 449, 401, 452, 390, 446],
  [371, 410, 371, 417, 371, 404], [395, 373, 390, 375, 401, 370], [424, 368, 419, 370, 427, 363],
  [429, 339, 427, 345, 433, 333], [467, 314, 461, 313, 474, 314], [505, 339, 503, 333, 508, 345],
  [510, 368, 508, 362, 516, 370], [571, 368, 565, 370, 573, 362], [571, 307, 573, 313, 565, 305],
  [541, 302, 548, 305, 536, 298], [515, 264, 517, 270, 517, 258], [541, 226, 536, 229, 548, 223],
  [571, 221, 566, 223, 573, 215], [575, 191, 573, 198, 578, 185],
];

function outlinePath(): string {
  const n = corners.length;
  return (
    corners
      .map(([cx, cy, ax, ay, bx, by], i) => {
        const prev = corners[(i + n - 1) % n];
        const next = corners[(i + 1) % n];
        const cross = (ax - prev[4]) * (next[3] - by) - (ay - prev[5]) * (next[2] - bx);
        const sweep = cross > 0 ? 1 : 0;
        let turn = Math.atan2(by - cy, bx - cx) - Math.atan2(ay - cy, ax - cx);
        if (!sweep) turn = -turn;
        turn = (turn + Math.PI * 4) % (Math.PI * 2);
        return `${i ? "L" : "M"}${ax} ${ay}A6.5 6.5 0 ${turn > Math.PI ? 1 : 0} ${sweep} ${bx} ${by}`;
      })
      .join("") + "Z"
  );
}

const coincidences: number[][] = [
  [655, 179], [580, 189], [580, 207], [555, 215], [573, 215], [543, 222], [525, 250], [543, 291], [555, 297],
  [572, 297], [580, 305], [580, 354], [572, 362], [669, 216], [685, 216], [697, 222], [715, 250], [668, 297],
  [660, 306], [660, 353], [668, 362], [725, 337], [725, 353], [759, 306], [800, 325], [806, 337], [806, 354],
  [815, 362], [831, 362], [843, 369], [863, 409], [844, 437], [833, 443], [816, 443], [808, 453], [808, 468],
  [802, 481], [773, 498], [760, 498], [726, 467], [717, 443], [670, 443], [661, 452], [661, 497], [670, 507],
  [686, 507], [698, 512], [716, 541], [716, 554], [698, 582], [686, 588], [669, 588], [661, 597], [661, 613],
  [580, 597], [580, 613], [571, 588], [554, 588], [543, 581], [524, 553], [524, 540], [543, 512], [554, 506],
  [572, 506], [580, 452], [571, 443], [522, 443], [514, 452], [514, 469], [508, 481], [468, 307], [481, 307],
  [440, 326], [434, 337], [434, 354], [425, 362], [408, 362], [397, 368], [379, 396], [378, 409], [397, 438],
  [409, 444], [426, 444], [434, 453], [434, 468], [439, 480], [509, 326], [515, 337], [515, 354], [524, 362],
];

const horizontals: number[][] = [
  [564, 216], [564, 298], [678, 217], [677, 298], [693, 363], [823, 363], [825, 444], [678, 508], [678, 588],
  [563, 588], [563, 507], [547, 444],
];

const verticals: number[][] = [
  [581, 199], [581, 330], [661, 200], [660, 330], [725, 345], [807, 345], [808, 461], [727, 459], [662, 475],
  [661, 605], [580, 605], [580, 475], [514, 461], [434, 345], [434, 461], [516, 345],
];

const glyphPath = (pts: number[][], d: string) => pts.map(([x, y]) => `M${x + 0.5} ${y + 0.5}${d}`).join("");

const hPath = glyphPath(horizontals, "m-3-4v9m6-9v9m-6-5h6");
const vPath = glyphPath(verticals, "m-4-4v2l3 6h2l3-6v-2");
const outerRings = glyphPath(coincidences, "m-1-4h2l3 3v2l-3 3h-2l-3-3v-2z");
const innerRings = glyphPath(coincidences, "m-1-2h2l1 1v2l-1 1h-2l-1-1v-2z");

function Sketch() {
  return (
    <SketchSvg viewBox="1 44 1241 654" shapeRendering="crispEdges" role="img" aria-label="Esquisse">
      {corners.map(([x, y], i) => (
        <rect key={i} x={x - 1} y={y - 1} width="3" height="3" fill="#8e8e92" />
      ))}
      <g fill="none">
        <path d={outerRings} stroke="#000" strokeWidth="3" />
        <path d={outerRings} stroke="#00e000" />
        <path d={innerRings} stroke="#00a008" />
        <path d={hPath + vPath} stroke="#04200c" strokeWidth="3" />
        <path d={hPath + vPath} stroke="#00d800" />
      </g>
      <path d={outlinePath()} fill="none" stroke="#fff" strokeWidth="2" />
    </SketchSvg>
  );
}

function Compass() {
  return (
    <CompassSvg width="78" height="84" viewBox="1143 64 78 84" aria-hidden="true">
      <path
        d="M1145 105A25 25 0 0 1 1163 98A26 26 0 0 1 1181 141H1145Z"
        fill="#1d4a66"
        stroke="#d4c4ff"
        strokeWidth="2"
        shapeRendering="crispEdges"
      />
      <path d="M1163 89V123H1197" fill="none" stroke="#d4c4ff" strokeWidth="2" />
      <rect x="1158" y="118" width="9" height="9" fill="#d00000" />
      <g fill="#ffff20" fontFamily="Noto Sans, sans-serif" fontSize="13">
        <text x="1171" y="83">y</text>
        <text x="1203" y="116">x</text>
        <text x="1169" y="117">z</text>
      </g>
    </CompassSvg>
  );
}

function Axis() {
  return (
    <AxisSvg width="30" height="42" viewBox="1206 636 30 42" aria-hidden="true">
      <path d="M1210.5 655V671.5H1229" fill="none" stroke="#fff" />
      <g fill="#fff" fontFamily="Noto Sans, sans-serif" fontSize="12">
        <text x="1210" y="655">y</text>
        <text x="1228" y="672">x</text>
      </g>
    </AxisSvg>
  );
}

const treeItems = ["Plan xy", "Plan yz", "Plan zx", "Corps principal"];

function SpecTree() {
  return (
    <Tree>
      <TreeNode>
        <TreeGlyph width="24" viewBox="0 0 24 28" shapeRendering="crispEdges" aria-hidden="true">
          <path d="M8 1h11l4 4v13H10z" fill="#fff" />
          <path d="M8 1h10l4 4" stroke="#0cb0b0" strokeWidth="2" fill="none" />
          <path d="M8 20V28" stroke="#fff" strokeWidth="2" />
          <circle cx="13" cy="13" r="5" fill="#44443c" stroke="#66665c" strokeWidth="4" strokeDasharray="3 2" />
          <circle cx="9" cy="12" r="5" fill="none" stroke="#ffe8a0" strokeWidth="3" strokeDasharray="3 2" />
          <path d="M0 16c5-3 9 0 8 4M2 21c5 2 9-1 10-4M0 20c1-4 5-4 8-2" stroke="#ffff00" strokeWidth="2" fill="none" />
        </TreeGlyph>
        Part1
      </TreeNode>
      {treeItems.map((label, i) => {
        const last = i === treeItems.length - 1;
        return (
          <TreeNode key={label}>
            <TreeGlyph width="44" viewBox="0 0 44 28" shapeRendering="crispEdges" aria-hidden="true">
              <path d={last ? "M8 0V10" : "M8 0V28M8 12H20"} stroke="#fff" strokeWidth="2" fill="none" />
              {last ? (
                <>
                  <circle cx="7" cy="11" r="5" fill="#8c8c8c" />
                  <rect x="5" y="8" width="7" height="6" fill="#000" />
                </>
              ) : (
                <>
                  <path d="M22 17.5h14l6-9" stroke="#0c8c9c" fill="none" />
                  <path d="M22 16.5l6-8h13l-6 8z" fill="#ffee90" stroke="#101040" />
                </>
              )}
            </TreeGlyph>
            {label}
          </TreeNode>
        );
      })}
    </Tree>
  );
}

/* ---------- palettes ---------- */

function PaletteHead({ title }: { title: string }) {
  return (
    <PaletteTitle>
      {title}
      <PaletteClose type="button" aria-label="Fermer">
        <CloseX width={8} height={7} />
      </PaletteClose>
    </PaletteTitle>
  );
}

function PaletteTool({ tool }: { tool: Tool }) {
  return (
    <PaletteCell $vertical $menu={tool.menu}>
      <ToolButton type="button" aria-label={tool.label}>
        <Icon name={tool.icon} />
      </ToolButton>
      {tool.menu && <Caret />}
    </PaletteCell>
  );
}

function Chevrons({ down }: { down?: boolean }) {
  const d = down ? "M1 1l3 3 3-3M1 5l3 3 3-3" : "M1 1l3 3-3 3M5 1l3 3-3 3";
  return (
    <svg width="9" height="9" viewBox="0 0 9 9" aria-hidden="true">
      <path d={d} stroke="#fff" strokeWidth="2" fill="none" />
      <path d={d} stroke="#9494a0" fill="none" />
    </svg>
  );
}

const menus: { label: string; w: number; plain?: boolean; active?: boolean }[] = [
  { label: "Démarrer", w: 64, plain: true, active: true },
  { label: "ENOVIA V5 VPM", w: 100, plain: true },
  { label: "Fichier", w: 59 },
  { label: "Edition", w: 61 },
  { label: "Affichage", w: 74 },
  { label: "Insertion", w: 71 },
  { label: "Outils", w: 55 },
  { label: "Fenêtre", w: 63 },
  { label: "Aide", w: 48 },
];

function AppMenus() {
  return (
    <MenuList>
      {menus.map((m) => (
        <li key={m.label}>
          <MenuItem type="button" $w={m.w} $active={m.active}>
            {m.plain ? (
              m.label
            ) : (
              <>
                <AccessKey>{m.label[0]}</AccessKey>
                {m.label.slice(1)}
              </>
            )}
          </MenuItem>
        </li>
      ))}
    </MenuList>
  );
}

function BottomArea() {
  return (
    <BottomWrap>
      <BottomBar>
        <ToolStrip items={bottomTools} />
        <More type="button" aria-label="Plus d'outils">
          <Chevrons />
        </More>
      </BottomBar>
      <StatusBar>
        <StatusPart $w={299} $sunken />
        <StatusPart $w={36} />
        <StatusPart $w={33} />
      </StatusBar>
      <Logo width="46" height="34" viewBox="1230 698 46 34" role="img" aria-label="CATIA">
        <path d="M1242 701c4-1 9-1 8 1c-1 2-3 2-4 3c5 0 6 2 3 6" fill="none" stroke="#e03030" strokeWidth="2" />
        <path d="M1238 711c7-1 11 1 8 5c-2 3-6 5-11 5l4-7" fill="none" stroke="#3a2a88" strokeWidth="2" />
        <path d="M1257 709c-7-1-9 1-6 4c3 4 3 7-4 7" fill="none" stroke="#f0a010" strokeWidth="2" />
        <text
          x="1240"
          y="730"
          fontFamily="DejaVu Sans, sans-serif"
          fontSize="9"
          fontWeight="700"
          fontStyle="italic"
          fill="#3a2a88"
        >
          CATIA
        </text>
      </Logo>
    </BottomWrap>
  );
}

export default function App() {
  return (
    <Window>
      <GlobalStyle />
      <TitleBar>
        <FlameIcon width={16} height={15} />
        <Title>CATIA V5 - [Part2.CATPart]</Title>
        <CaptionButtons>
          <CaptionButton type="button" aria-label="Réduire">
            <svg width="12" height="6" aria-hidden="true">
              <rect x="0.5" y="1.5" width="11" height="3" fill="#fff" stroke="#44444c" />
            </svg>
          </CaptionButton>
          <CaptionButton type="button" aria-label="Restaurer">
            <svg width="13" height="13" aria-hidden="true">
              <rect x="4" y="2" width="7" height="7" fill="none" stroke="#44444c" strokeWidth="3" />
              <rect x="4" y="2" width="7" height="7" fill="none" stroke="#fff" />
              <rect x="2.5" y="4.5" width="6" height="6" fill="#77777f" stroke="#fff" strokeWidth="2" />
            </svg>
          </CaptionButton>
          <CaptionButton type="button" aria-label="Fermer" $close>
            <CloseX width={13} height={11} />
          </CaptionButton>
        </CaptionButtons>
      </TitleBar>
      <MenuBar>
        <FlameIcon width={20} height={18} />
        <AppMenus />
        <MdiGroup>
          <MdiButton type="button" aria-label="Réduire le document">
            <svg width="8" height="8" aria-hidden="true">
              <path d="M1 6h6" stroke="#6b8295" strokeWidth="2" />
            </svg>
          </MdiButton>
          <MdiButton type="button" aria-label="Restaurer le document">
            <svg width="9" height="9" aria-hidden="true">
              <path d="M2.5 3V1.5h5v4H6M0.5 3.5h5v4h-5z" stroke="#6b8295" fill="none" />
              <path d="M0 4h6" stroke="#6b8295" strokeWidth="2" />
            </svg>
          </MdiButton>
          <MdiButton type="button" aria-label="Fermer le document">
            <svg width="8" height="8" aria-hidden="true">
              <path d="M1 1l6 6M7 1l-6 6" stroke="#6b8295" strokeWidth="2" />
            </svg>
          </MdiButton>
        </MdiGroup>
      </MenuBar>
      <Body>
        <Main>
          <Canvas>
            <SpecTree />
            <Sketch />
            <Compass />
            <Axis />
            <LeftPalette $w={49}>
              <PaletteHead title="O..." />
              <PaletteBody $h={173}>
                <Grip $vertical $space={12} $before={3} />
                <PaletteTool tool={t("grid", "Grille")} />
                <PaletteTool tool={t("snap", "Accrochage")} />
                <PaletteRule />
                <PaletteTool tool={t("construction", "Élément de construction")} />
                <PaletteTool tool={t("geomConstraint", "Contraintes géométriques")} />
                <PaletteTool tool={t("dimConstraint", "Contraintes dimensionnelles")} />
                <PaletteRule />
              </PaletteBody>
            </LeftPalette>
            <ViewPalette $w={49}>
              <PaletteHead title="V..." />
              <PaletteBody $h={74}>
                <Grip $vertical $space={13} $before={4} />
                <PaletteTool tool={t("viewDoc", "Vue")} />
                <PaletteTool tool={t("viewDoc2", "Vue associée")} />
              </PaletteBody>
            </ViewPalette>
            <OperationPalette $w={51}>
              <PaletteHead title="O..." />
              <PaletteBody $h={164}>
                <Grip $vertical $space={13} $before={4} />
                <PaletteTool tool={t("corner", "Coin")} />
                <PaletteTool tool={t("chamfer", "Chanfrein")} />
                <PaletteTool tool={t("trim", "Relimitation", M)} />
                <PaletteTool tool={t("mirror", "Symétrie", M)} />
                <PaletteTool tool={t("project", "Projection 3D", M)} />
              </PaletteBody>
            </OperationPalette>
          </Canvas>
        </Main>
        <SideBar>
          <ToolStrip items={sideTools} vertical />
          <More $down type="button" aria-label="Plus d'outils">
            <Chevrons down />
          </More>
        </SideBar>
      </Body>
      <BottomArea />
    </Window>
  );
}
